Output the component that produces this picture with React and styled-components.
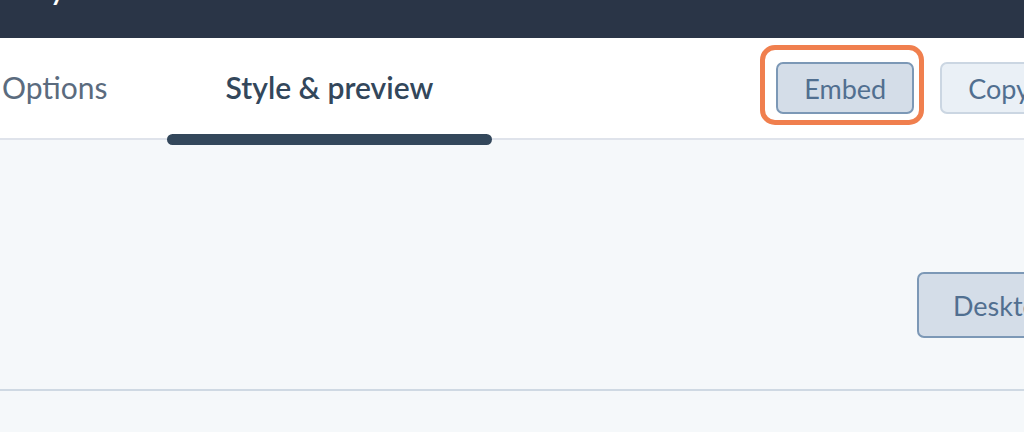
import styled, { createGlobalStyle } from "styled-components";

const GlobalStyle = createGlobalStyle`
  html, body {
    margin: 0;
    padding: 0;
    background: #f5f8fa;
    font-family: Lato, "Noto Sans", sans-serif;
    overflow: hidden;
  }
`;

const Page = styled.div`
  width: 1024px;
  height: 432px;
  display: flex;
  flex-direction: column;
  background: #f5f8fa;
  overflow: hidden;
`;

const TopBar = styled.header`
  height: 38px;
  background: #2a3547;
  overflow: hidden;
  padding-left: 22px;
  flex-shrink: 0;
`;

const Title = styled.h1`
  margin: -31px 0 0;
  font-size: 30px;
  line-height: 38px;
  font-weight: 600;
  color: #fff;
`;

const TabBar = styled.div`
  height: 100px;
  background: #fff;
  border-bottom: 2px solid #dfe3eb;
  display: flex;
  align-items: stretch;
  flex-shrink: 0;
`;

const Tabs = styled.nav`
  display: flex;
  margin-left: -57px;
`;

const Tab = styled.div`
  position: relative;
  display: flex;
  align-items: center;
  padding: 0 59px 2px;
  font-size: 30px;
  color: ${(p) => (p.$active ? "#33475b" : "#5b6b7e")};
  font-weight: ${(p) => (p.$active ? 600 : 400)};
  white-space: nowrap;

  &::after {
    content: "";
    display: ${(p) => (p.$active ? "block" : "none")};
    position: absolute;
    left: 0;
    right: 0;
    bottom: -7px;
    height: 11px;
    border-radius: 6px;
    background: #33475b;
  }
`;

const Actions = styled.div`
  display: flex;
  align-items: center;
  gap: 26px;
  margin-left: 284px;
  flex-shrink: 0;
`;

const Button = styled.button`
  position: relative;
  flex-shrink: 0;
  height: ${(p) => (p.$tall ? "66px" : "52px")};
  padding: 0 ${(p) => (p.$tall ? "34px" : "26px")};
  border-radius: 7px;
  border: 2px solid ${(p) => (p.$selected ? "#7c98b6" : "#cbd6e2")};
  background: ${(p) => (p.$selected ? "#d4dde8" : "#eaf0f6")};
  color: #516f90;
  font-family: Lato, "Noto Sans", sans-serif;
  font-size: 27px;
  white-space: nowrap;
`;

const FocusRing = styled.span`
  position: absolute;
  left: -18px;
  top: -19px;
  width: 154px;
  height: 70px;
  border: 5px solid #f07f4e;
  border-radius: 15px;
  pointer-events: none;
`;

const Body = styled.main`
  flex: 1;
  display: flex;
  flex-direction: column;
`;

const Toolbar = styled.div`
  height: 251px;
  box-sizing: border-box;
  display: flex;
  align-items: center;
  border-bottom: 2px solid #cfd9e3;
  padding: 81px 0 0 917px;
`;

export default function App() {
  return (
    <Page>
      <GlobalStyle />
      <TopBar>
        <Title>My form</Title>
      </TopBar>
      <TabBar>
        <Tabs>
          <Tab>Options</Tab>
          <Tab $active>Style &amp; preview</Tab>
        </Tabs>
        <Actions>
          <Button $selected>
            Embed
            <FocusRing />
          </Button>
          <Button>Copy link</Button>
        </Actions>
      </TabBar>
      <Body>
        <Toolbar>
          <Button $selected $tall>
            Desktop
          </Button>
        </Toolbar>
      </Body>
    </Page>
  );
}
